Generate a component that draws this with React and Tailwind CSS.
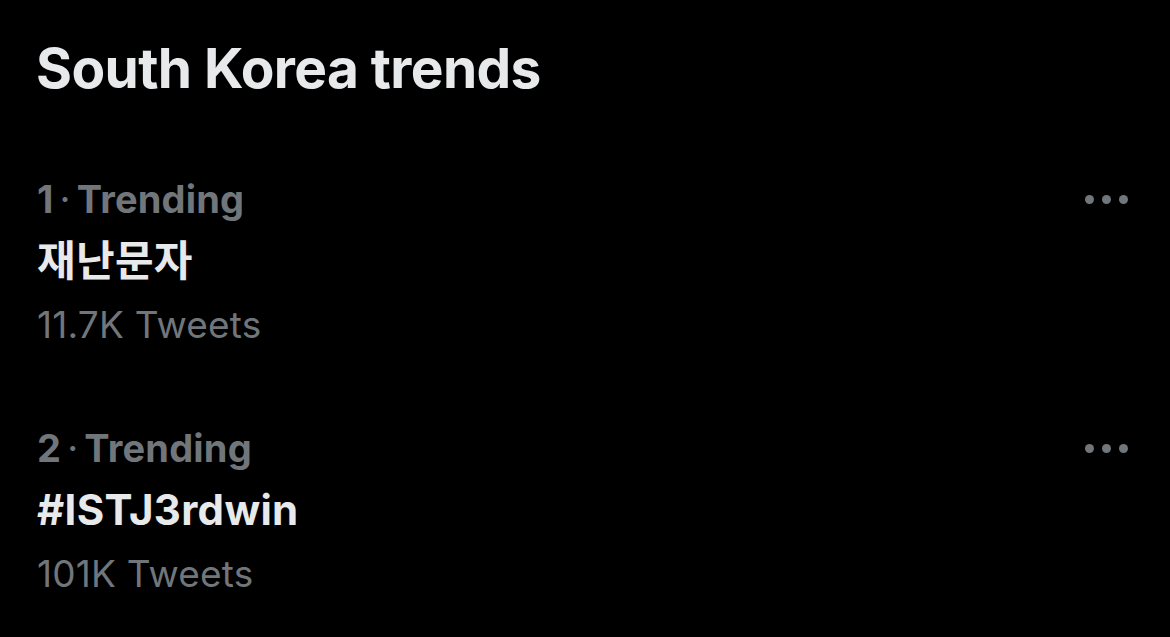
export default function App() {
  const trends = [
    { rank: 1, name: '재난문자', count: '11.7K Tweets' },
    { rank: 2, name: '#ISTJ3rdwin', count: '101K Tweets' },
  ];

  return (
    <div className="w-[1170px] h-[637px] bg-black overflow-hidden font-['Inter','Noto_Sans_CJK_KR',sans-serif]">
      <h1 className="pl-[36px] pt-[36px] text-[55px] leading-[64px] font-bold text-[#e7e9ea] tracking-[-0.6px]">South Korea trends</h1>
      <div className="mt-[68px]">
        {trends.map((t) => (
          <div key={t.rank} className="flex justify-between pl-[37px] pr-[42px] mb-[61px]">
            <div>
              <div className="text-[38px] leading-[62px] font-bold text-[#71767b] h-[62px] tracking-[0.2px]">
                {t.rank}<span className="px-[6px] font-normal">·</span>Trending
              </div>
              <div className="text-[42px] leading-[62px] font-bold text-[#e7e9ea] h-[64px] tracking-[0.3px]">{t.name}</div>
              <div className="text-[37px] leading-[62px] text-[#71767b] h-[62px] tracking-[0.2px]">{t.count}</div>
            </div>
            <div className="flex gap-[8px] pt-[27px]">
              <span className="w-[9px] h-[9px] rounded-full bg-[#71767b]" />
              <span className="w-[9px] h-[9px] rounded-full bg-[#71767b]" />
              <span className="w-[9px] h-[9px] rounded-full bg-[#71767b]" />
            </div>
          </div>
        ))}
      </div>
    </div>
  );
}
